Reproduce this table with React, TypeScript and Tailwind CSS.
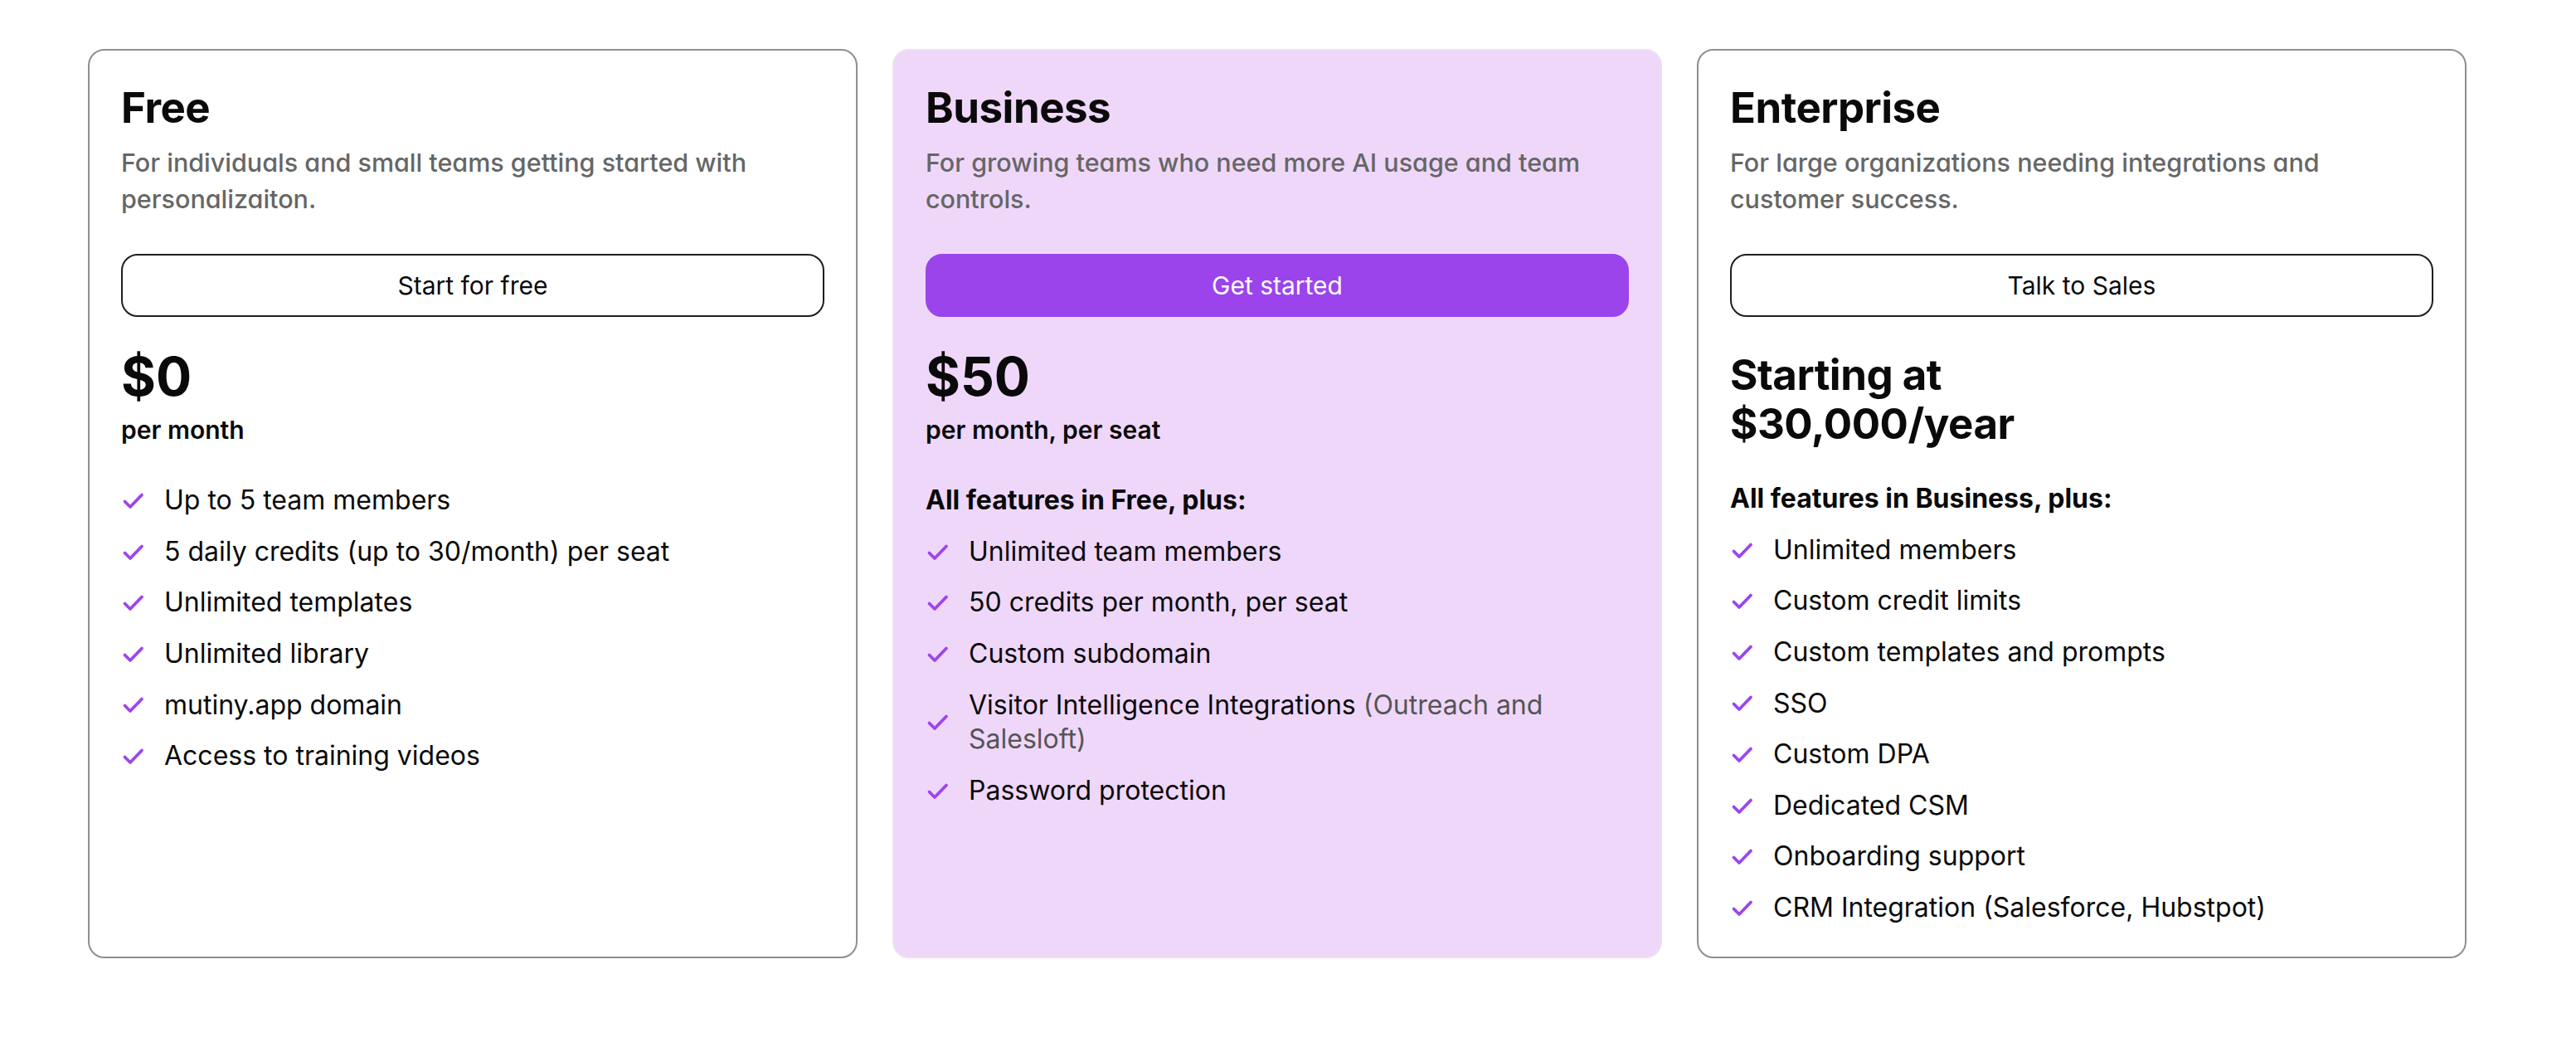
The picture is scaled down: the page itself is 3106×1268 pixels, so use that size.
import type { ReactNode } from "react";

type Feature = { text: string; note?: string };

type Plan = {
  name: string;
  blurb: string;
  cta: string;
  primary?: boolean;
  price?: string;
  period?: string;
  priceLines?: string[];
  heading?: string;
  features: Feature[];
};

const PLANS: Plan[] = [
  {
    name: "Free",
    blurb: "For individuals and small teams getting started with personalizaiton.",
    cta: "Start for free",
    price: "$0",
    period: "per month",
    features: [
      { text: "Up to 5 team members" },
      { text: "5 daily credits (up to 30/month) per seat" },
      { text: "Unlimited templates" },
      { text: "Unlimited library" },
      { text: "mutiny.app domain" },
      { text: "Access to training videos" },
    ],
  },
  {
    name: "Business",
    blurb: "For growing teams who need more AI usage and team controls.",
    cta: "Get started",
    primary: true,
    price: "$50",
    period: "per month, per seat",
    heading: "All features in Free, plus:",
    features: [
      { text: "Unlimited team members" },
      { text: "50 credits per month, per seat" },
      { text: "Custom subdomain" },
      { text: "Visitor Intelligence Integrations", note: "(Outreach and Salesloft)" },
      { text: "Password protection" },
    ],
  },
  {
    name: "Enterprise",
    blurb: "For large organizations needing integrations and customer success.",
    cta: "Talk to Sales",
    priceLines: ["Starting at", "$30,000/year"],
    heading: "All features in Business, plus:",
    features: [
      { text: "Unlimited members" },
      { text: "Custom credit limits" },
      { text: "Custom templates and prompts" },
      { text: "SSO" },
      { text: "Custom DPA" },
      { text: "Dedicated CSM" },
      { text: "Onboarding support" },
      { text: "CRM Integration (Salesforce, Hubstpot)" },
    ],
  },
];

function Check() {
  return (
    <svg width="28" height="24" viewBox="0 0 28 24" fill="none" aria-hidden className="shrink-0">
      <path
        d="M4.5 13.5 L11 20 L25 5.5"
        stroke="#9d45ee"
        strokeWidth="3.8"
        strokeLinecap="round"
        strokeLinejoin="round"
      />
    </svg>
  );
}

function FeatureRow({ children }: { children: ReactNode }) {
  return (
    <li className="flex items-center gap-6">
      <Check />
      <span className="text-[32px] leading-[1.3] text-[#0a0a0a]">{children}</span>
    </li>
  );
}

function PlanCard({ plan }: { plan: Plan }) {
  return (
    <div
      className={
        plan.primary
          ? "flex w-[928px] flex-col rounded-[20px] border-2 border-[#ebe1f1] bg-[#efd7fa] p-[38px]"
          : "flex w-[928px] flex-col rounded-[20px] border-2 border-[#8f8f8f] bg-white p-[38px]"
      }
    >
      <h2 className="text-[51px] font-bold leading-[1.2] tracking-[-0.5px] text-[#0a0a0a]">{plan.name}</h2>
      <p className="mt-[14px] text-[30.5px] font-medium leading-[44px] text-[#666666] [font-feature-settings:'cv11']">
        {plan.blurb}
      </p>

      <button
        type="button"
        className={
          plan.primary
            ? "mt-[44px] h-[76px] w-full rounded-[20px] border-2 border-[#9b44ec] bg-[#9b44ec] text-[30px] text-white"
            : "mt-[44px] h-[76px] w-full rounded-[20px] border-2 border-[#1f1f1f] bg-white text-[30px] text-[#0a0a0a]"
        }
      >
        {plan.cta}
      </button>

      {plan.priceLines ? (
        <div className="mt-10 text-[51px] font-bold leading-[59px] tracking-[-0.5px] text-[#0a0a0a]">
          {plan.priceLines.map((line) => (
            <div key={line}>{line}</div>
          ))}
        </div>
      ) : (
        <div className="mt-10">
          <div className="text-[64px] font-bold leading-none text-[#0a0a0a]">{plan.price}</div>
          <div className="mt-3 text-[30px] font-semibold leading-[40px] text-[#0a0a0a]">{plan.period}</div>
        </div>
      )}

      <div className={plan.priceLines ? "mt-[40px] flex flex-col gap-5" : "mt-[44px] flex flex-col gap-5"}>
        {plan.heading && (
          <p className="text-[32px] font-bold leading-[1.3] text-[#0a0a0a]">{plan.heading}</p>
        )}
        <ul className="flex flex-col gap-5">
          {plan.features.map((f) => (
            <FeatureRow key={f.text}>
              {f.text}
              {f.note && <span className="text-[#555555]"> {f.note}</span>}
            </FeatureRow>
          ))}
        </ul>
      </div>
    </div>
  );
}

export default function App() {
  return (
    <div className="min-h-screen bg-white font-['Inter',sans-serif] antialiased">
      <div className="flex gap-[42px] pl-[106px] pt-[59px]">
        {PLANS.map((plan) => (
          <PlanCard key={plan.name} plan={plan} />
        ))}
      </div>
    </div>
  );
}
